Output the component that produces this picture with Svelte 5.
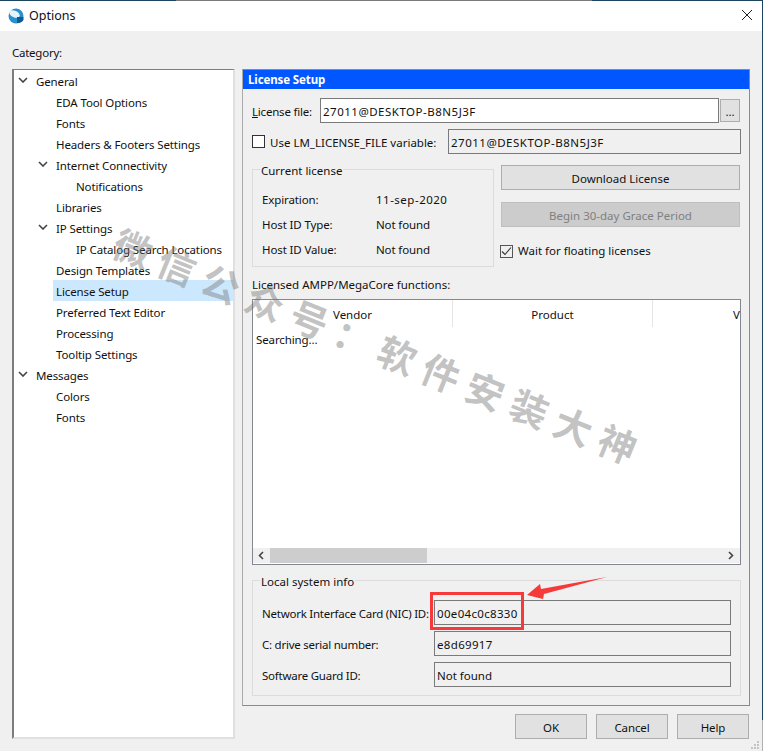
<script>
    const tree = [
        { label: 'General', level: 0, open: true },
        { label: 'EDA Tool Options', level: 1 },
        { label: 'Fonts', level: 1 },
        { label: 'Headers & Footers Settings', level: 1 },
        { label: 'Internet Connectivity', level: 1, open: true },
        { label: 'Notifications', level: 2 },
        { label: 'Libraries', level: 1 },
        { label: 'IP Settings', level: 1, open: true },
        { label: 'IP Catalog Search Locations', level: 2 },
        { label: 'Design Templates', level: 1 },
        { label: 'License Setup', level: 1, selected: true },
        { label: 'Preferred Text Editor', level: 1 },
        { label: 'Processing', level: 1 },
        { label: 'Tooltip Settings', level: 1 },
        { label: 'Messages', level: 0, open: true },
        { label: 'Colors', level: 1 },
        { label: 'Fonts', level: 1 }
    ];
    const license = [
        ['Expiration:', '11-sep-2020', true],
        ['Host ID Type:', 'Not found'],
        ['Host ID Value:', 'Not found']
    ];
    const sysinfo = [
        ['Network Interface Card (NIC) ID:', '00e04c0c8330', true],
        ['C: drive serial number:', 'e8d69917', true],
        ['Software Guard ID:', 'Not found']
    ];
</script>

<div class="window">
    <div class="topline"></div>
    <div class="titlebar">
        <svg class="appicon" width="16" height="16" viewBox="0 0 16 16">
            <circle cx="8" cy="8" r="7.5" fill="#2b8fcb" />
            <ellipse cx="6.5" cy="6" rx="5.6" ry="3.2" transform="rotate(25 6.5 6)" fill="#e4f2fa" />
            <path d="M9 9 L15.5 9 L15.5 12 Q13.5 15.5 9 15 Z" fill="#0d5c99" />
        </svg>
        <span>Options</span>
        <svg class="close" width="12" height="12" viewBox="0 0 12 12">
            <path d="M1 1 L11 11 M11 1 L1 11" stroke="#222" stroke-width="1" fill="none" />
        </svg>
    </div>

    <div class="content">
        <div class="category">Category:</div>
        <div class="columns">
            <div class="tree">
                {#each tree as item}
                    <div class="node level{item.level}" class:selected={item.selected}>
                        {#if item.open}
                            <svg class="chevron" width="10" height="6" viewBox="0 0 10 6">
                                <path d="M1 1 L5 5 L9 1" stroke="#444" stroke-width="1.6" fill="none" />
                            </svg>
                        {/if}
                        <span>{item.label}</span>
                    </div>
                {/each}
            </div>

            <div class="panel">
                <div class="panelhead">License Setup</div>
                <div class="panelbody">
                    <div class="filerow">
                        <label for="licfile"><u>L</u>icense file:</label>
                        <div class="input white num" id="licfile">27011@DESKTOP-B8N5J3F</div>
                        <div class="dots">...</div>
                    </div>
                    <div class="varrow">
                        <span class="check"></span>
                        <span class="varlabel">Use LM_LICENSE_FILE variable:</span>
                        <div class="input num">27011@DESKTOP-B8N5J3F</div>
                    </div>

                    <div class="midrow">
                        <fieldset class="current">
                            <legend>Current license</legend>
                            {#each license as row}
                                <div class="licrow"><span>{row[0]}</span><span class:num={row[2]}>{row[1]}</span></div>
                            {/each}
                        </fieldset>
                        <div class="actions">
                            <div class="btn">Download License</div>
                            <div class="btn disabled">Begin 30-day Grace Period</div>
                            <div class="wait">
                                <span class="check">
                                    <svg width="13" height="13" viewBox="0 0 13 13">
                                        <path d="M2 6.5 L5 9.5 L11 2.5" stroke="#333" stroke-width="1.1" fill="none" />
                                    </svg>
                                </span>
                                <span>Wait for floating licenses</span>
                            </div>
                        </div>
                    </div>

                    <div class="tabletitle">Licensed AMPP/MegaCore functions:</div>
                    <div class="table">
                        <div class="thead">
                            <div class="th">Vendor</div>
                            <div class="th">Product</div>
                            <div class="th last">V</div>
                        </div>
                        <div class="tbody">Searching...</div>
                        <div class="scrollbar">
                            <svg width="17" height="15" viewBox="0 0 17 15">
                                <path d="M10 4 L6.5 7.5 L10 11" stroke="#444" stroke-width="1.6" fill="none" />
                            </svg>
                            <div class="track"><div class="thumb"></div></div>
                            <svg width="18" height="15" viewBox="0 0 18 15">
                                <path d="M7 4 L10.5 7.5 L7 11" stroke="#444" stroke-width="1.6" fill="none" />
                            </svg>
                        </div>
                    </div>

                    <fieldset class="sysinfo">
                        <legend>Local system info</legend>
                        {#each sysinfo as row}
                            <div class="sysrow">
                                <span>{row[0]}</span>
                                <div class="input" class:num={row[2]}>{row[1]}</div>
                            </div>
                        {/each}
                    </fieldset>
                </div>
            </div>
        </div>

        <div class="footer">
            <div class="btn">OK</div>
            <div class="btn">Cancel</div>
            <div class="btn">Help</div>
        </div>
    </div>

    <div class="watermark">微信公众号：软件安装大神</div>
    <div class="redbox"></div>
    <svg class="arrow" width="84" height="26" viewBox="0 0 84 26">
        <path d="M1 19 L14 8 L15 13 L81 1 L18 18 L17 23 Z" fill="#f63a3a" />
    </svg>
    <svg class="grip" width="10" height="10" viewBox="0 0 10 10">
        <path d="M7 1h2v2h-2z M4 4h2v2h-2z M7 4h2v2h-2z M1 7h2v2h-2z M4 7h2v2h-2z M7 7h2v2h-2z" fill="#c4c4c4" />
    </svg>
    <div class="edge"></div>
</div>

<style>
    :global(body) {
        margin: 0;
        background: #f0f0f0;
    }
    .window {
        position: relative;
        box-sizing: border-box;
        width: 763px;
        height: 751px;
        overflow: hidden;
        background: #f0f0f0;
        color: #111;
        font-family: "Noto Sans", "Open Sans", sans-serif;
        font-size: 11.5px;
        letter-spacing: -0.12px;
        line-height: 16px;
    }
    .topline {
        height: 1px;
        background: linear-gradient(to right, #1c4660 176px, #7a7a7a 176px, #7a7a7a 592px, #1c4660 592px);
    }
    .titlebar {
        height: 30px;
        background: #fff;
        display: flex;
        align-items: center;
        padding: 0 10px 0 8px;
        font-size: 12.5px;
        letter-spacing: 0;
    }
    .titlebar span {
        margin-left: 5px;
        flex: 1;
    }
    .close {
        margin-top: -2px;
    }
    .content {
        padding: 14px 0 0 12px;
    }
    .category {
        height: 24px;
        letter-spacing: -0.25px;
    }
    .columns {
        display: flex;
        gap: 7px;
    }
    .tree {
        flex: none;
        box-sizing: border-box;
        width: 223px;
        height: 670px;
        background: #fff;
        border: 2px solid #7d7d7d;
        border-top-width: 1px;
        border-right: 2px solid #e0e0e0;
        border-bottom: 2px solid #e0e0e0;
    }
    .node {
        position: relative;
        height: 21px;
        line-height: 23px;
        white-space: nowrap;
    }
    .level0 { padding-left: 22px; }
    .level1 { padding-left: 42px; }
    .level2 { padding-left: 62px; }
    .selected {
        background: #cce8ff;
        margin-left: 39px;
        padding-left: 3px;
    }
    .chevron {
        position: absolute;
        top: 7px;
        margin-left: -18px;
    }
    .panel {
        flex: none;
        box-sizing: border-box;
        width: 508px;
        height: 637px;
        border: 1px solid #8a8a8a;
        border-left: 1px solid #aaa;
    }
    .panelhead {
        height: 19px;
        line-height: 20px;
        background: #0057ff;
        color: #fff;
        font-weight: 700;
        padding-left: 5px;
    }
    .panelbody {
        padding: 9px 8px 0 9px;
        letter-spacing: 0;
    }
    .num {
        letter-spacing: 0.5px;
    }
    .input {
        box-sizing: border-box;
        height: 25px;
        line-height: 25px;
        border: 1px solid #7a7a7a;
        padding-left: 2px;
        flex: 1;
        white-space: nowrap;
    }
    .input.num {
        letter-spacing: 0.5px;
    }
    .white {
        background: #fff;
    }
    .filerow {
        display: flex;
        align-items: center;
    }
    .filerow label {
        width: 68px;
        padding-top: 2px;
        letter-spacing: -0.2px;
    }
    .dots {
        box-sizing: border-box;
        width: 20px;
        height: 23px;
        margin: 0 1px;
        background: #e1e1e1;
        border: 1px solid #adadad;
        text-align: center;
        line-height: 24px;
    }
    .varrow {
        display: flex;
        align-items: center;
        margin-top: 6px;
    }
    .check {
        box-sizing: border-box;
        width: 13px;
        height: 13px;
        background: #fff;
        border: 1px solid #333;
        display: inline-flex;
        flex: none;
    }
    .check svg {
        margin: -1px;
    }
    .varlabel {
        width: 178px;
        margin-left: 5px;
        padding-top: 2px;
    }
    .midrow {
        display: flex;
        gap: 7px;
        margin-top: 11px;
    }
    fieldset {
        box-sizing: border-box;
        margin: 0;
        min-width: 0;
        border: 1px solid #dcdcdc;
    }
    legend {
        padding: 4px 1px 0;
        margin-left: -2px;
    }
    .current {
        width: 242px;
        height: 107px;
        padding: 0 9px;
        margin-top: -5px;
    }
    .current legend {
        padding-top: 3px;
    }
    .licrow {
        display: flex;
        height: 25px;
        line-height: 25px;
        letter-spacing: -0.12px;
    }
    .licrow:first-of-type {
        margin-top: 8px;
    }
    .licrow span:first-child {
        width: 114px;
    }
    .licrow .num {
        letter-spacing: 0.5px;
    }
    .actions {
        width: 239px;
    }
    .btn {
        box-sizing: border-box;
        height: 25px;
        line-height: 26px;
        text-align: center;
        background: #e1e1e1;
        border: 1px solid #adadad;
    }
    .disabled {
        margin-top: 12px;
        background: #cccccc;
        border-color: #bfbfbf;
        color: #808080;
    }
    .wait {
        display: flex;
        align-items: center;
        gap: 5px;
        margin: 16px 0 0 -1px;
    }
    .wait .check {
        background: #f0f0f0;
        border-color: #555;
    }
    .tabletitle {
        margin-top: 10px;
        height: 22px;
    }
    .table {
        box-sizing: border-box;
        height: 266px;
        width: 489px;
        background: #fff;
        border: 1px solid #828790;
        display: flex;
        flex-direction: column;
        overflow: hidden;
    }
    .thead {
        display: flex;
        height: 27px;
        flex: none;
    }
    .th {
        flex: none;
        width: 200px;
        height: 27px;
        line-height: 30px;
        text-align: center;
        border-right: 1px solid #e5e5e5;
        box-sizing: border-box;
    }
    .th.last {
        width: 88px;
        padding-left: 80px;
        text-align: left;
        border-right: none;
    }
    .tbody {
        flex: 1;
        padding: 5px 3px;
        letter-spacing: -0.12px;
    }
    .scrollbar {
        flex: none;
        height: 15px;
        margin-bottom: 1px;
        background: #f0f0f0;
        display: flex;
    }
    .track {
        flex: 1;
    }
    .thumb {
        width: 157px;
        height: 15px;
        background: #cdcdcd;
    }
    .sysinfo {
        width: 489px;
        height: 126px;
        margin-top: 5px;
        padding: 0 9px;
    }
    .sysrow {
        display: flex;
        align-items: center;
        margin-bottom: 6px;
    }
    .sysrow:first-of-type {
        margin-top: 10px;
    }
    .sysrow span {
        width: 172px;
        white-space: nowrap;
        padding-top: 3px;
        letter-spacing: -0.24px;
    }
    .sysrow .input.num {
        letter-spacing: 0.33px;
    }
    .footer {
        display: flex;
        justify-content: flex-end;
        gap: 9px;
        margin-top: -25px;
        padding-right: 14px;
    }
    .footer .btn {
        width: 72px;
    }
    .watermark {
        position: absolute;
        left: 95px;
        top: 328px;
        font-family: "Noto Sans CJK SC", sans-serif;
        font-weight: 700;
        font-size: 38px;
        line-height: 38px;
        letter-spacing: 9.5px;
        white-space: nowrap;
        color: rgba(120, 120, 120, 0.45);
        transform: rotate(22deg);
        pointer-events: none;
    }
    .redbox {
        position: absolute;
        left: 430px;
        top: 592px;
        width: 94px;
        height: 38px;
        box-sizing: border-box;
        border: 3px solid #f63a3a;
    }
    .arrow {
        position: absolute;
        left: 526px;
        top: 576px;
    }
    .grip {
        position: absolute;
        right: 3px;
        bottom: 1px;
    }
    .edge {
        position: absolute;
        top: 0;
        right: 0;
        width: 1px;
        height: 751px;
        background: linear-gradient(to bottom, #1c4660 720px, #b0b0b0 720px);
    }
</style>
